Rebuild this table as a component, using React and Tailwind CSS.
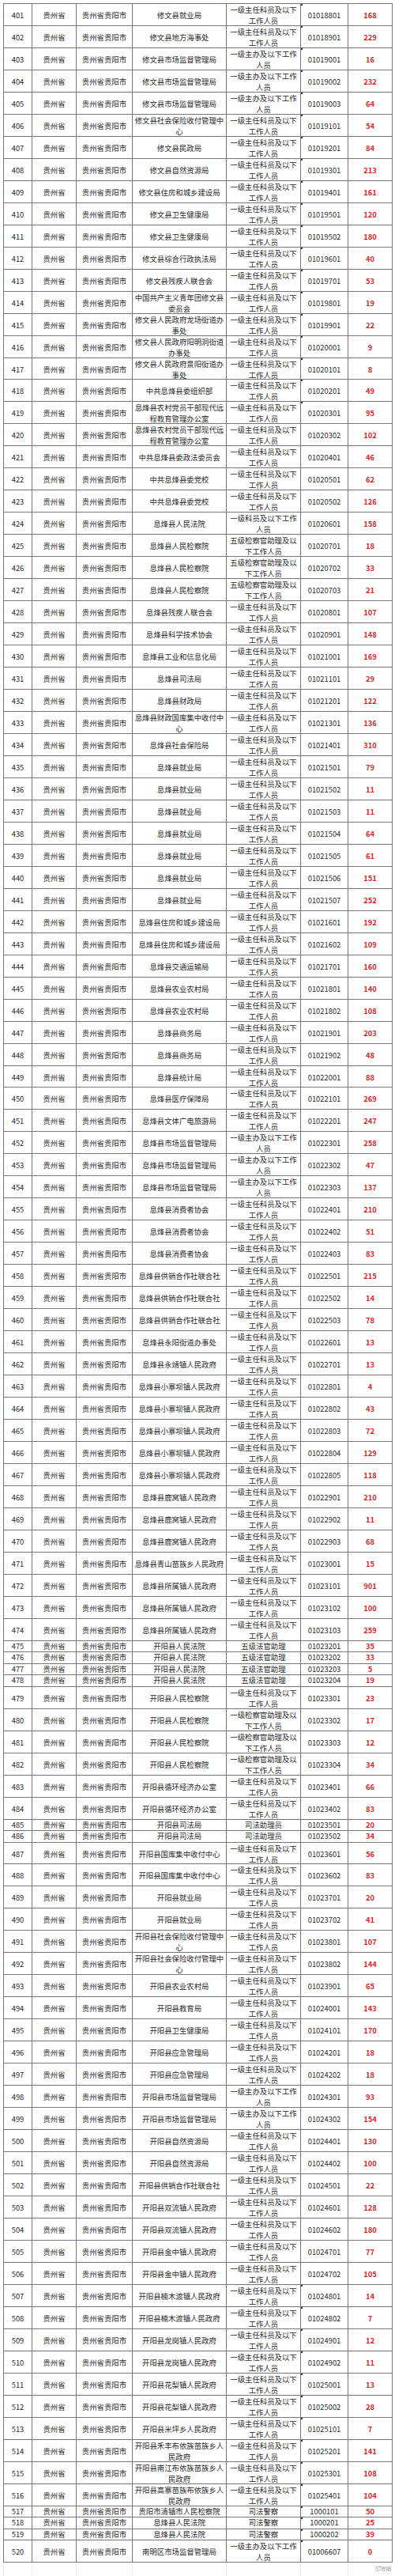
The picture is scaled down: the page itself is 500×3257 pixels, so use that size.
const A = '一级主任科员及以下工作人员'
const B = '一级主办及以下工作人员'
const C = '一级科员及以下工作人员'
const D = '五级检察官助理及以下工作人员'
const E = '五级法官助理'
const F = '一级检察官助理及以下工作人员'
const G = '司法助理员'
const H = '司法警察'

const rows = [
  ['修文县就业局', A, '01018801', 168],
  ['修文县地方海事处', A, '01018901', 229],
  ['修文县市场监督管理局', B, '01019001', 16],
  ['修文县市场监督管理局', B, '01019002', 232],
  ['修文县市场监督管理局', B, '01019003', 64],
  ['修文县社会保险收付管理中心', A, '01019101', 54],
  ['修文县民政局', A, '01019201', 84],
  ['修文县自然资源局', A, '01019301', 213],
  ['修文县住房和城乡建设局', A, '01019401', 161],
  ['修文县卫生健康局', A, '01019501', 120],
  ['修文县卫生健康局', A, '01019502', 180],
  ['修文县综合行政执法局', A, '01019601', 40],
  ['修文县残疾人联合会', A, '01019701', 53],
  ['中国共产主义青年团修文县委员会', A, '01019801', 19],
  ['修文县人民政府龙场街道办事处', A, '01019901', 22],
  ['修文县人民政府阳明洞街道办事处', A, '01020001', 9],
  ['修文县人民政府景阳街道办事处', A, '01020101', 8],
  ['中共息烽县委组织部', A, '01020201', 49],
  ['息烽县农村党员干部现代远程教育管理办公室', A, '01020301', 95],
  ['息烽县农村党员干部现代远程教育管理办公室', A, '01020302', 102],
  ['中共息烽县委政法委员会', A, '01020401', 46],
  ['中共息烽县委党校', A, '01020501', 62],
  ['中共息烽县委党校', A, '01020502', 126],
  ['息烽县人民法院', C, '01020601', 158],
  ['息烽县人民检察院', D, '01020701', 18],
  ['息烽县人民检察院', D, '01020702', 33],
  ['息烽县人民检察院', D, '01020703', 21],
  ['息烽县残疾人联合会', A, '01020801', 107],
  ['息烽县科学技术协会', A, '01020901', 148],
  ['息烽县工业和信息化局', A, '01021001', 169],
  ['息烽县司法局', A, '01021101', 29],
  ['息烽县财政局', A, '01021201', 122],
  ['息烽县财政国库集中收付中心', A, '01021301', 136],
  ['息烽县社会保险局', A, '01021401', 310],
  ['息烽县就业局', A, '01021501', 79],
  ['息烽县就业局', A, '01021502', 11],
  ['息烽县就业局', A, '01021503', 11],
  ['息烽县就业局', A, '01021504', 64],
  ['息烽县就业局', A, '01021505', 61],
  ['息烽县就业局', A, '01021506', 151],
  ['息烽县就业局', A, '01021507', 252],
  ['息烽县住房和城乡建设局', A, '01021601', 192],
  ['息烽县住房和城乡建设局', A, '01021602', 109],
  ['息烽县交通运输局', A, '01021701', 160],
  ['息烽县农业农村局', A, '01021801', 140],
  ['息烽县农业农村局', A, '01021802', 108],
  ['息烽县商务局', A, '01021901', 203],
  ['息烽县商务局', A, '01021902', 48],
  ['息烽县统计局', A, '01022001', 88],
  ['息烽县医疗保障局', A, '01022101', 269],
  ['息烽县文体广电旅游局', A, '01022201', 247],
  ['息烽县市场监督管理局', B, '01022301', 258],
  ['息烽县市场监督管理局', B, '01022302', 47],
  ['息烽县市场监督管理局', B, '01022303', 137],
  ['息烽县消费者协会', A, '01022401', 210],
  ['息烽县消费者协会', A, '01022402', 51],
  ['息烽县消费者协会', A, '01022403', 83],
  ['息烽县供销合作社联合社', A, '01022501', 215],
  ['息烽县供销合作社联合社', A, '01022502', 14],
  ['息烽县供销合作社联合社', A, '01022503', 78],
  ['息烽县永阳街道办事处', A, '01022601', 13],
  ['息烽县永靖镇人民政府', A, '01022701', 13],
  ['息烽县小寨坝镇人民政府', A, '01022801', 4],
  ['息烽县小寨坝镇人民政府', A, '01022802', 43],
  ['息烽县小寨坝镇人民政府', A, '01022803', 72],
  ['息烽县小寨坝镇人民政府', A, '01022804', 129],
  ['息烽县小寨坝镇人民政府', A, '01022805', 118],
  ['息烽县鹿窝镇人民政府', A, '01022901', 210],
  ['息烽县鹿窝镇人民政府', A, '01022902', 11],
  ['息烽县鹿窝镇人民政府', A, '01022903', 68],
  ['息烽县青山苗族乡人民政府', A, '01023001', 15],
  ['息烽县所属镇人民政府', A, '01023101', 901],
  ['息烽县所属镇人民政府', A, '01023102', 100],
  ['息烽县所属镇人民政府', A, '01023103', 259],
  ['开阳县人民法院', E, '01023201', 35],
  ['开阳县人民法院', E, '01023202', 33],
  ['开阳县人民法院', E, '01023203', 5],
  ['开阳县人民法院', E, '01023204', 19],
  ['开阳县人民检察院', A, '01023301', 23],
  ['开阳县人民检察院', F, '01023302', 17],
  ['开阳县人民检察院', F, '01023303', 12],
  ['开阳县人民检察院', F, '01023304', 34],
  ['开阳县循环经济办公室', A, '01023401', 66],
  ['开阳县循环经济办公室', A, '01023402', 83],
  ['开阳县司法局', G, '01023501', 20],
  ['开阳县司法局', G, '01023502', 34],
  ['开阳县国库集中收付中心', A, '01023601', 56],
  ['开阳县国库集中收付中心', A, '01023602', 83],
  ['开阳县就业局', A, '01023701', 20],
  ['开阳县就业局', A, '01023702', 41],
  ['开阳县社会保险收付管理中心', A, '01023801', 107],
  ['开阳县社会保险收付管理中心', A, '01023802', 144],
  ['开阳县农业农村局', A, '01023901', 65],
  ['开阳县教育局', A, '01024001', 143],
  ['开阳县卫生健康局', A, '01024101', 170],
  ['开阳县应急管理局', A, '01024201', 18],
  ['开阳县应急管理局', A, '01024202', 18],
  ['开阳县市场监督管理局', B, '01024301', 93],
  ['开阳县市场监督管理局', B, '01024302', 154],
  ['开阳县自然资源局', A, '01024401', 130],
  ['开阳县自然资源局', A, '01024402', 100],
  ['开阳县供销合作社联合社', A, '01024501', 22],
  ['开阳县双流镇人民政府', A, '01024601', 128],
  ['开阳县双流镇人民政府', A, '01024602', 180],
  ['开阳县金中镇人民政府', A, '01024701', 77],
  ['开阳县金中镇人民政府', A, '01024702', 105],
  ['开阳县楠木渡镇人民政府', A, '01024801', 14],
  ['开阳县楠木渡镇人民政府', A, '01024802', 7],
  ['开阳县龙岗镇人民政府', A, '01024901', 12],
  ['开阳县龙岗镇人民政府', A, '01024902', 11],
  ['开阳县花梨镇人民政府', A, '01025001', 13],
  ['开阳县花梨镇人民政府', A, '01025002', 28],
  ['开阳县米坪乡人民政府', A, '01025101', 7],
  ['开阳县禾丰布依族苗族乡人民政府', A, '01025201', 141],
  ['开阳县南江布依族苗族乡人民政府', A, '01025301', 108],
  ['开阳县高寨苗族布依族乡人民政府', A, '01025401', 104],
  ['贵阳市清镇市人民检察院', H, '1000101', 50],
  ['息烽县人民法院', H, '1000201', 25],
  ['息烽县人民法院', H, '1000202', 39],
  ['南明区市场监督管理局', B, '01006607', 0],
]

const short = [E, G, H]

function Row({ no, unit, pos, code, count }) {
  const single = short.includes(pos)
  const mark = no <= 419 || no >= 507
  return (
    <div
      className={`grid grid-cols-[36px_56px_71px_119px_94px_60px_56px] border-b border-[#777] ${
        single ? 'h-[14.5px] leading-[13px]' : 'h-[27.97px] leading-[14px]'
      }`}
    >
      <div className="flex items-center justify-center border-r border-[#777]">{no}</div>
      <div className="flex items-center justify-center border-r border-[#777]">贵州省</div>
      <div className="flex items-center justify-center border-r border-[#777]">贵州省贵阳市</div>
      <div className="flex items-center justify-center border-r border-[#777] px-[1px] text-center">{unit}</div>
      <div className="flex items-center justify-center border-r border-[#777] px-[2px] text-center">{pos}</div>
      <div className="relative flex items-center justify-center border-r border-[#777]">
        {mark && <span className="absolute left-0 top-0 h-[2px] w-[2px] bg-[#3a3a3a]" />}
        {code}
      </div>
      <div className="flex items-center justify-center border-r border-[#777] font-bold text-[#dc1f26]">{count}</div>
    </div>
  )
}

export default function App() {
  return (
    <div className="w-[500px] bg-white pl-[4px] pt-[4px] font-['Noto_Sans_CJK_SC',sans-serif] text-[9.4px] text-[#2a2a2a]">
      <div className="w-[493px] border-l border-t border-[#777]">
        {rows.map((r, i) => (
          <Row key={i} no={401 + i} unit={r[0]} pos={r[1]} code={r[2]} count={r[3]} />
        ))}
      </div>
      <div className="grid h-[17px] w-[493px] grid-cols-[36px_56px_71px_119px_94px_60px_56px] border-l border-[#eee]">
        <div className="border-r border-[#eee]" />
        <div className="border-r border-[#eee]" />
        <div className="border-r border-[#eee]" />
        <div className="border-r border-[#eee]" />
        <div className="border-r border-[#eee]" />
        <div className="border-r border-[#eee]" />
        <div className="flex items-center justify-end pr-[2px] font-['Liberation_Serif',serif] text-[8px] text-[#8a8a8a]">
          57898
        </div>
      </div>
    </div>
  )
}
